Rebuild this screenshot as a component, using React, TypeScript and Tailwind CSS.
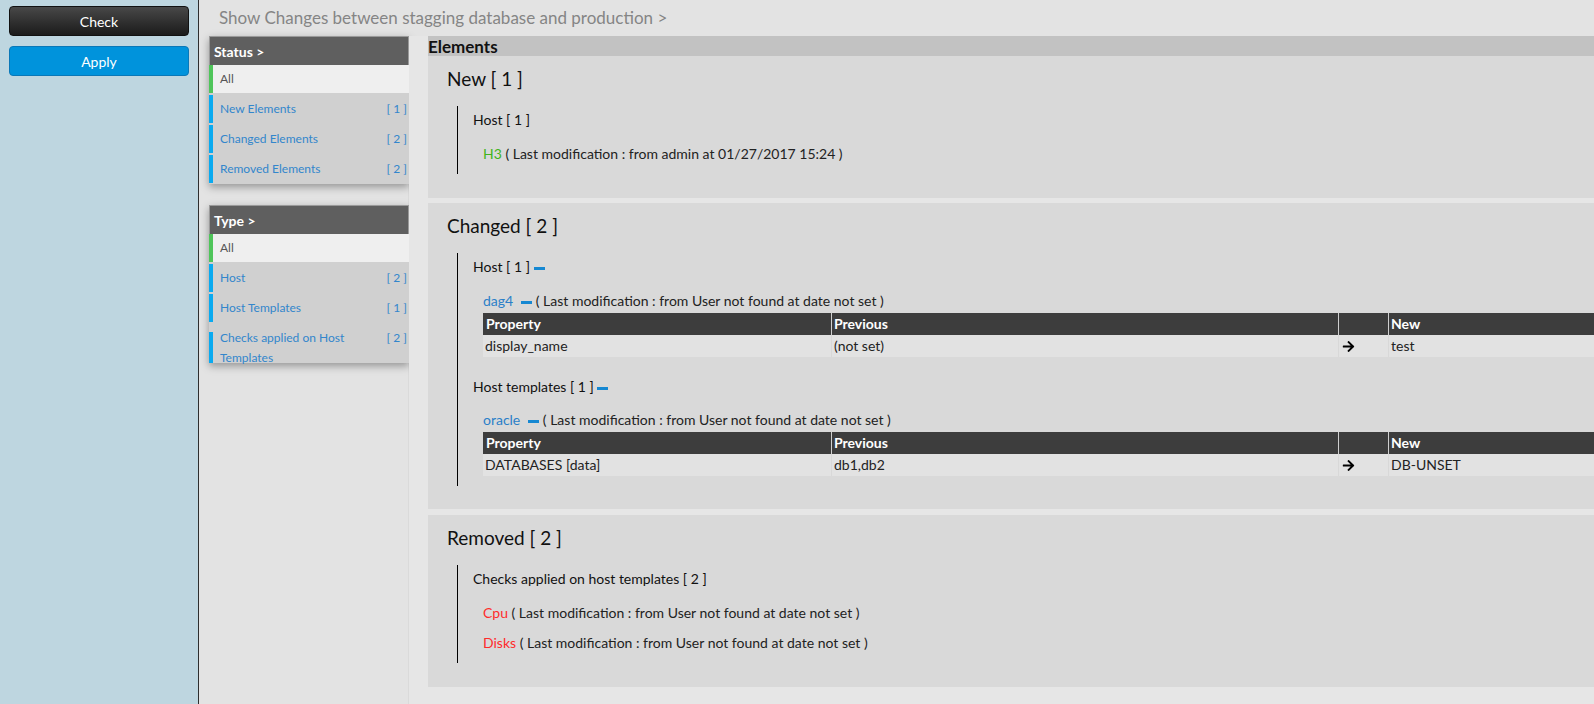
import React from "react";
import { FaArrowRight } from "react-icons/fa";

const Minus = () => (
  <span className="inline-block w-[11px] h-[3px] bg-[#1688d2] align-middle" />
);

const FilterRow = ({ label, count }: { label: string; count: string }) => (
  <div className="mt-[2px] flex h-[28px] items-center border-l-4 border-[#09aaf0] pl-[7px] pr-[2px] text-[12px] text-[#3286cc]">
    <span className="flex-1">{label}</span>
    <span>{count}</span>
  </div>
);

const AllRow = () => (
  <div className="flex h-[28px] items-center border-l-4 border-[#4fc55a] bg-[#efefef] pl-[7px] text-[12px] text-[#555]">
    All
  </div>
);

const Panel = ({ title, children }: { title: string; children: React.ReactNode }) => (
  <div className="w-[200px] bg-[#d0d0d0] shadow-[0_3px_8px_rgba(0,0,0,0.35)]">
    <div className="flex h-[29px] items-center border border-b-0 border-[#9a9a9a] bg-[#5f5f5f] pl-[4px] text-[14px] font-bold text-white">
      {title}
    </div>
    {children}
  </div>
);

const Table = ({ prop, prev, next }: { prop: string; prev: string; next: string }) => (
  <div className="mt-[2px] text-[14px]">
    <div className="flex h-[22px] bg-[#3d3d3d] font-bold leading-[22px] text-white">
      <div className="w-[348px] shrink-0 pl-[3px]">Property</div>
      <div className="w-[507px] shrink-0 border-l border-[#cfcfcf] pl-[2px]">Previous</div>
      <div className="w-[50px] shrink-0 border-l border-[#cfcfcf]" />
      <div className="flex-1 border-l border-[#cfcfcf] pl-[2px]">New</div>
    </div>
    <div className="flex h-[22px] bg-[#e2e2e2] leading-[22px] text-[#222]">
      <div className="w-[348px] shrink-0 pl-[2px]">{prop}</div>
      <div className="w-[507px] shrink-0 border-l border-[#d8d8d8] pl-[2px]">{prev}</div>
      <div className="flex w-[50px] shrink-0 items-center border-l border-[#d8d8d8] pl-[3px]">
        <FaArrowRight size={13} color="#000" />
      </div>
      <div className="flex-1 border-l border-[#d8d8d8] pl-[2px]">{next}</div>
    </div>
  </div>
);

const Mod = () => (
  <span className="text-[#222]"> ( Last modification : from User not found at date not set )</span>
);

export default function App() {
  return (
    <div
      className="flex h-[704px] w-full overflow-hidden"
      style={{ fontFamily: "Lato, 'Open Sans', 'Liberation Sans', sans-serif" }}
    >
      <aside className="w-[199px] shrink-0 border-r border-[#2e2e2e] bg-[#bed6e0] px-[9px] pt-[6px]">
        <button className="flex h-[30px] w-full items-center justify-center rounded-[4px] border border-[#111] bg-gradient-to-b from-[#484848] to-[#1c1c1c] text-[14px] text-white">
          Check
        </button>
        <button className="mt-[10px] flex h-[30px] w-full items-center justify-center rounded-[4px] border border-[#0a78b8] bg-[#0093dc] text-[14px] text-white">
          Apply
        </button>
      </aside>

      <main className="flex min-w-0 flex-1 flex-col bg-[#e3e3e3]">
        <div className="flex h-[36px] shrink-0 items-center pl-[20px] text-[17px] text-[#858585]">
          Show Changes between stagging database and production &gt;
        </div>

        <div className="flex min-h-0 flex-1">
          <div className="w-[210px] shrink-0 border-r border-[#dadada] pl-[10px]">
            <Panel title="Status >">
              <AllRow />
              <FilterRow label="New Elements" count="[ 1 ]" />
              <FilterRow label="Changed Elements" count="[ 2 ]" />
              <FilterRow label="Removed Elements" count="[ 2 ]" />
              <div className="h-[1px]" />
            </Panel>
            <div className="h-[21px]" />
            <Panel title="Type >">
              <AllRow />
              <FilterRow label="Host" count="[ 2 ]" />
              <FilterRow label="Host Templates" count="[ 1 ]" />
              <div className="my-[10px] flex h-[31px] border-l-4 border-[#09aaf0] pl-[7px] pr-[2px] text-[12px] text-[#3286cc]">
                <span className="-mt-[4px] flex-1 leading-5">
                  Checks applied on Host
                  <br />
                  Templates
                </span>
                <span className="-mt-[4px] leading-5">[ 2 ]</span>
              </div>
            </Panel>
          </div>

          <div className="min-w-0 flex-1 bg-[#e6e6e6] pl-[19px]">
            <div className="flex h-[20px] items-center bg-[#c2c2c2] text-[17px] font-bold leading-none text-[#111]">
              Elements
            </div>

            {/* New */}
            <section className="bg-[#d9d9d9] pb-[24px] pl-[19px] pt-[12px] text-[#111]">
              <h2 className="text-[19px] leading-[22px]">New [ 1 ]</h2>
              <div className="ml-[10px] mt-[16px] border-l border-black pb-[10px] pl-[15px] pt-[4px]">
                <div className="text-[14px] leading-5">Host [ 1 ]</div>
                <div className="mt-[14px] pl-[10px] text-[14px] leading-5">
                  <span className="text-[#3fb41c]">H3</span>
                  <span className="text-[#222]"> ( Last modification : from admin at 01/27/2017 15:24 )</span>
                </div>
              </div>
            </section>

            {/* Changed */}
            <section className="mt-[5px] bg-[#d9d9d9] pb-[23px] pl-[19px] pt-[12px] text-[#111]">
              <h2 className="text-[19px] leading-[22px]">Changed [ 2 ]</h2>
              <div className="ml-[10px] mt-[16px] border-l border-black pb-[10px] pt-[4px]">
                <div className="pl-[15px] text-[14px] leading-5">
                  Host [ 1 ] <Minus />
                </div>
                <div className="mt-[14px] pl-[25px] text-[14px] leading-5">
                  <span className="text-[#2b7fc8]">dag4</span>
                  <span className="ml-[8px]">
                    <Minus />
                  </span>
                  <Mod />
                </div>
                <div className="pl-[25px]">
                  <Table prop="display_name" prev="(not set)" next="test" />
                </div>

                <div className="mt-[20px] pl-[15px] text-[14px] leading-5">
                  Host templates [ 1 ] <Minus />
                </div>
                <div className="mt-[13px] pl-[25px] text-[14px] leading-5">
                  <span className="text-[#2b7fc8]">oracle</span>
                  <span className="ml-[8px]">
                    <Minus />
                  </span>
                  <Mod />
                </div>
                <div className="pl-[25px]">
                  <Table prop="DATABASES [data]" prev="db1,db2" next="DB-UNSET" />
                </div>
              </div>
            </section>

            {/* Removed */}
            <section className="mt-[6px] bg-[#d9d9d9] pb-[24px] pl-[19px] pt-[12px] text-[#111]">
              <h2 className="text-[19px] leading-[22px]">Removed [ 2 ]</h2>
              <div className="ml-[10px] mt-[16px] border-l border-black pb-[10px] pl-[15px] pt-[4px]">
                <div className="text-[14px] leading-5">Checks applied on host templates [ 2 ]</div>
                <div className="mt-[14px] pl-[10px] text-[14px] leading-5">
                  <span className="text-[#ff2b2b]">Cpu</span>
                  <Mod />
                </div>
                <div className="mt-[10px] pl-[10px] text-[14px] leading-5">
                  <span className="text-[#ff2b2b]">Disks</span>
                  <Mod />
                </div>
              </div>
            </section>
          </div>
        </div>
      </main>
    </div>
  );
}
